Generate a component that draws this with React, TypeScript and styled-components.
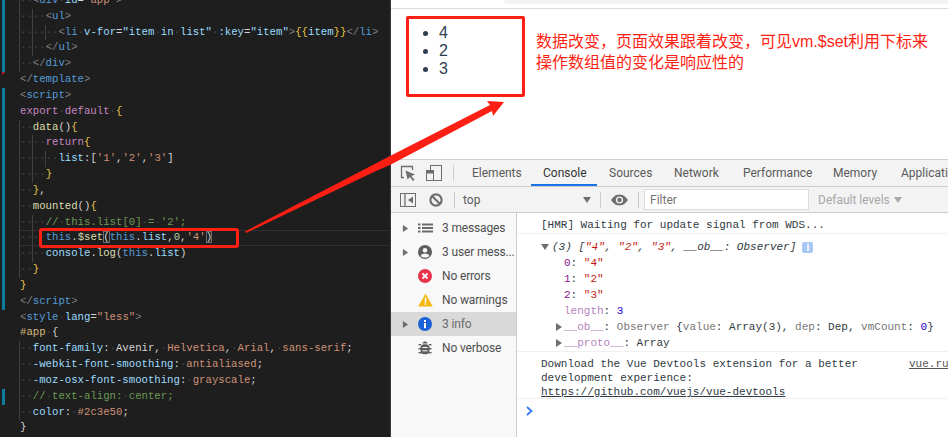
import React from "react"
import styled, { createGlobalStyle } from "styled-components"

const GlobalStyle = createGlobalStyle`
  html, body {
    margin: 0;
    padding: 0;
    background: #fff;
  }
`

const Page = styled.div`
  position: relative;
  display: flex;
  width: 948px;
  height: 437px;
  overflow: hidden;
  font-family: Roboto, "Liberation Sans", sans-serif;
`

/* ---------- editor ---------- */

const Editor = styled.div`
  position: relative;
  flex: 0 0 390px;
  height: 437px;
  overflow: hidden;
  background: #1e1e1e;
  font-family: "Liberation Mono", monospace;
  font-size: 10.67px;
`

const Code = styled.div`
  margin-top: -7px;
`

const GUIDE_X = [19, 32, 45]

const lineBackground = (guides: number[], mod?: "bar" | "del", active?: boolean) => {
  const layers = guides.map(
    (g) => `linear-gradient(#404040, #404040) ${GUIDE_X[g]}px 0 / 1px 100% no-repeat`
  )
  if (mod === "bar") layers.push("linear-gradient(#0c7d9d, #0c7d9d) 2px 0 / 3px 100% no-repeat")
  if (mod === "del") {
    layers.push("linear-gradient(to bottom right, #b3142a 50%, transparent 50%) 2px 0 / 4px 4px no-repeat")
  }
  if (active) {
    layers.push("linear-gradient(#303030, #303030) 20px 0 / 100% 1px no-repeat")
    layers.push("linear-gradient(#303030, #303030) 20px 100% / 100% 1px no-repeat")
  }
  return layers.length ? layers.join(", ") : "none"
}

const Line = styled.div<{ $guides: number[]; $mod?: "bar" | "del"; $active?: boolean }>`
  height: 15.84px;
  line-height: 15.84px;
  padding-left: 20px;
  white-space: pre;
  background: ${(p) => lineBackground(p.$guides, p.$mod, p.$active)};
`

const Token = styled.span<{ $c: string; $match?: boolean }>`
  color: ${(p) => p.$c};
  ${(p) => (p.$match ? "box-shadow: inset 0 0 0 1px #6f6f6f;" : "")}
`

const Dot = styled.span`
  color: #454545;
`

const SetMarker = styled.div`
  position: absolute;
  left: 39px;
  top: 228px;
  width: 200px;
  height: 20px;
  box-sizing: border-box;
  border: 3px solid #fe1f14;
  border-radius: 3px;
`

const c = {
  punct: "#808080",
  tag: "#569cd6",
  attr: "#9cdcfe",
  str: "#ce9178",
  text: "#d4d4d4",
  kw: "#c586c0",
  fn: "#dcdcaa",
  gold: "#e8c547",
  com: "#6a9955",
  num: "#b5cea8",
  sel: "#d7ba7d",
}

type Part = [string, string, boolean?]
type CodeLine = { parts: Part[]; guides?: number[]; mod?: "bar" | "del"; active?: boolean }

const codeLines: CodeLine[] = [
  { mod: "bar", guides: [0], parts: [["  ", c.text], ["<", c.punct], ["div", c.tag], [" id", c.attr], ["=", c.text], ['"app"', c.str], [">", c.punct]] },
  { mod: "bar", guides: [0, 1], parts: [["    ", c.text], ["<", c.punct], ["ul", c.tag], [">", c.punct]] },
  {
    mod: "bar",
    guides: [0, 1, 2],
    parts: [
      ["      ", c.text], ["<", c.punct], ["li", c.tag], [" v-for", c.attr], ["=", c.text], ['"item in list"', c.attr],
      [" :key", c.attr], ["=", c.text], ['"item"', c.attr], [">", c.punct], ["{{", c.gold], ["item", c.attr], ["}}", c.gold], ["</", c.punct], ["li", c.tag], [">", c.punct],
    ],
  },
  { mod: "bar", guides: [0, 1], parts: [["    ", c.text], ["</", c.punct], ["ul", c.tag], [">", c.punct]] },
  { mod: "bar", guides: [0], parts: [["  ", c.text], ["</", c.punct], ["div", c.tag], [">", c.punct]] },
  { mod: "del", parts: [["</", c.punct], ["template", c.tag], [">", c.punct]] },
  { mod: "bar", parts: [["<", c.punct], ["script", c.tag], [">", c.punct]] },
  { mod: "bar", parts: [["export default ", c.kw], ["{", c.gold]] },
  { mod: "bar", guides: [0], parts: [["  ", c.text], ["data", c.fn], ["()", c.text], ["{", c.gold]] },
  { mod: "bar", guides: [0, 1], parts: [["    ", c.text], ["return", c.kw], ["{", c.gold]] },
  { mod: "bar", guides: [0, 1, 2], parts: [["      ", c.text], ["list", c.attr], [":", c.text], ["[", c.text], ["'1'", c.str], [",", c.text], ["'2'", c.str], [",", c.text], ["'3'", c.str], ["]", c.text]] },
  { mod: "bar", guides: [0, 1], parts: [["    ", c.text], ["}", c.gold]] },
  { mod: "bar", guides: [0], parts: [["  ", c.text], ["}", c.gold], [",", c.text]] },
  { mod: "bar", guides: [0], parts: [["  ", c.text], ["mounted", c.fn], ["()", c.text], ["{", c.gold]] },
  { mod: "bar", guides: [0, 1], parts: [["    ", c.text], ["// this.list[0] = '2';", c.com]] },
  {
    mod: "bar",
    guides: [0, 1],
    active: true,
    parts: [
      ["    ", c.text], ["this", c.tag], [".", c.text], ["$set", c.fn], ["(", c.text, true], ["this", c.tag], [".", c.text], ["list", c.attr],
      [",", c.text], ["0", c.num], [",", c.text], ["'4'", c.str], [")", c.text, true],
    ],
  },
  { mod: "bar", guides: [0, 1], parts: [["    ", c.text], ["console", c.attr], [".", c.text], ["log", c.fn], ["(", c.text], ["this", c.tag], [".", c.text], ["list", c.attr], [")", c.text]] },
  { mod: "bar", guides: [0], parts: [["  ", c.text], ["}", c.gold]] },
  { mod: "bar", parts: [["}", c.gold]] },
  { mod: "bar", parts: [["</", c.punct], ["script", c.tag], [">", c.punct]] },
  { parts: [["<", c.punct], ["style", c.tag], [" lang", c.attr], ["=", c.text], ['"less"', c.str], [">", c.punct]] },
  { parts: [["#app", c.sel], [" ", c.text], ["{", c.text]] },
  { guides: [0], parts: [["  ", c.text], ["font-family", c.attr], [": ", c.text], ["Avenir", c.text], [", ", c.text], ["Helvetica", c.str], [", ", c.text], ["Arial", c.str], [", ", c.text], ["sans-serif", c.str], [";", c.text]] },
  { guides: [0], parts: [["  ", c.text], ["-webkit-font-smoothing", c.attr], [": ", c.text], ["antialiased", c.str], [";", c.text]] },
  { guides: [0], parts: [["  ", c.text], ["-moz-osx-font-smoothing", c.attr], [": ", c.text], ["grayscale", c.str], [";", c.text]] },
  { mod: "bar", guides: [0], parts: [["  ", c.text], ["// text-align: center;", c.com]] },
  { guides: [0], parts: [["  ", c.text], ["color", c.attr], [": ", c.text], ["#2c3e50", c.str], [";", c.text]] },
  { parts: [["}", c.text]] },
]

const renderPart = ([text, color, match]: Part, i: number) => (
  <Token key={i} $c={color} $match={match}>
    {text.split(/( )/).map((piece, j) =>
      piece === " " ? <Dot key={j}>·</Dot> : piece
    )}
  </Token>
)

/* ---------- browser ---------- */

const Browser = styled.div`
  flex: 1;
  min-width: 0;
  display: flex;
  flex-direction: column;
  border-left: 1px solid #3a3a3a;
  background: #fff;
`

const Preview = styled.div`
  flex: 0 0 160px;
  box-sizing: border-box;
  display: flex;
  flex-direction: column;
  border-bottom: 1px solid #cfcfcf;
`

const TopStrip = styled.div`
  height: 8px;
  border-bottom: 1px solid #dcdcdc;
  display: flex;
  justify-content: flex-end;
`

const StripFill = styled.div`
  width: 444px;
  height: 4px;
  background: #f1f3f4;
  border-bottom-left-radius: 4px;
`

const PreviewBody = styled.div`
  display: flex;
  align-items: flex-start;
  padding: 7px 0 0 15px;
`

const ResultBox = styled.div`
  flex: none;
  width: 119px;
  height: 81px;
  box-sizing: border-box;
  border: 3px solid #fe1f14;
  border-radius: 2px;
  padding-top: 5px;
`

const ResultList = styled.ul`
  margin: 0;
  padding-left: 30px;
  font-family: "Liberation Sans", Arial, sans-serif;
  font-size: 16px;
  line-height: 18px;
  color: #2c3e50;
`

const Note = styled.div`
  flex: none;
  margin: 15px 0 0 11px;
  width: 400px;
  font-family: "Liberation Sans", "Noto Sans CJK SC", sans-serif;
  font-size: 16px;
  line-height: 21px;
  color: #fe1f14;
`

const DevTools = styled.div`
  flex: 1;
  min-height: 0;
  display: flex;
  flex-direction: column;
`

const Toolbar = styled.div<{ $h: number }>`
  flex: 0 0 ${(p) => p.$h}px;
  box-sizing: border-box;
  display: flex;
  align-items: center;
  padding-left: 9px;
  background: #f3f3f3;
  border-bottom: 1px solid #cccccc;
  white-space: nowrap;
`

const Divider = styled.div<{ $left: number; $right: number }>`
  flex: none;
  width: 1px;
  height: 16px;
  margin: 0 ${(p) => p.$right}px 0 ${(p) => p.$left}px;
  background: #cccccc;
`

const Tab = styled.div<{ $active?: boolean; $w: number }>`
  flex: none;
  box-sizing: border-box;
  width: ${(p) => p.$w}px;
  height: 100%;
  padding: 2px 0 0 12px;
  display: flex;
  align-items: center;
  font-size: 12px;
  color: ${(p) => (p.$active ? "#333" : "#5a5a5a")};
  border-bottom: 2px solid ${(p) => (p.$active ? "#1a73e8" : "transparent")};
`

const ContextLabel = styled.div`
  flex: none;
  width: 120px;
  font-size: 12px;
  color: #5a5a5a;
`

const FilterBox = styled.div`
  flex: none;
  box-sizing: border-box;
  width: 165px;
  height: 21px;
  padding-left: 5px;
  display: flex;
  align-items: center;
  background: #fff;
  border: 1px solid #dcdcdc;
  font-size: 12px;
  color: #757575;
`

const LevelsLabel = styled.div`
  flex: none;
  margin: 0 4px 0 9px;
  font-size: 12px;
  color: #a8a8a8;
`

const ConsoleArea = styled.div`
  flex: 1;
  min-height: 0;
  display: flex;
`

const Sidebar = styled.div`
  flex: 0 0 125px;
  min-width: 0;
  padding-top: 3px;
  background: #f8f8f8;
  border-right: 1px solid #cccccc;
`

const SideRow = styled.div<{ $selected?: boolean }>`
  height: 24px;
  display: flex;
  align-items: center;
  padding-left: 11px;
  font-size: 12px;
  letter-spacing: -0.15px;
  color: ${(p) => (p.$selected ? "#6a6a6a" : "#4f4f4f")};
  background: ${(p) => (p.$selected ? "#d9d9d9" : "transparent")};
  white-space: nowrap;
`

const ArrowSlot = styled.div`
  flex: 0 0 8px;
  display: flex;
`

const IconSlot = styled.div`
  flex: 0 0 16px;
  margin: 0 9px 0 7px;
  display: flex;
  justify-content: center;
`

const Output = styled.div`
  flex: 1;
  min-width: 0;
  font-family: "Liberation Mono", monospace;
  font-size: 11px;
  color: #303942;
`

const PlainMessage = styled.div`
  height: 21px;
  box-sizing: border-box;
  padding: 5px 0 0 24px;
  line-height: 14px;
  border-bottom: 1px solid #f0f0f0;
  white-space: pre;
`

const LinkedMessage = styled.div`
  height: 47px;
  box-sizing: border-box;
  display: flex;
  padding: 5px 0 0 24px;
  border-bottom: 1px solid #f0f0f0;
  white-space: pre;
`

const TreeMessage = styled.div`
  height: 118px;
  box-sizing: border-box;
  padding: 5px 0 0 24px;
  border-bottom: 1px solid #f0f0f0;
  white-space: pre;
`

const TreeRow = styled.div<{ $indent?: number; $italic?: boolean }>`
  height: 16px;
  line-height: 16px;
  display: flex;
  align-items: center;
  padding-left: ${(p) => p.$indent ?? 0}px;
  font-style: ${(p) => (p.$italic ? "italic" : "normal")};
`

const Twist = styled.div<{ $w: number }>`
  flex: 0 0 ${(p) => p.$w}px;
  display: flex;
`

const MessageText = styled.div`
  width: 368px;
  flex: none;
  line-height: 14px;
`

const UrlText = styled.span`
  text-decoration: underline;
`

const SourceLink = styled.span`
  flex: none;
  line-height: 14px;
  color: #545454;
  text-decoration: underline;
`

const Prompt = styled.div`
  padding: 7px 0 0 9px;
  display: flex;
`

const Key = styled.span<{ $dim?: boolean }>`
  color: ${(p) => (p.$dim ? "#b583c0" : "#881391")};
`
const Str = styled.span`
  color: #c41a16;
`
const Num = styled.span`
  color: #1c00cf;
`
const Muted = styled.span`
  color: #777;
`

const InfoBadge = styled.span`
  width: 11px;
  height: 11px;
  margin-left: 6px;
  border-radius: 2px;
  background: #a9c7f5;
  color: #fff;
  font-family: "Liberation Sans", sans-serif;
  font-size: 10px;
  font-style: normal;
  font-weight: bold;
  line-height: 11px;
  text-align: center;
`

const Overlay = styled.svg`
  position: absolute;
  left: 0;
  top: 0;
  pointer-events: none;
`

/* ---------- drawings ---------- */

const GRAY = "#6e6e6e"

const InspectIcon = () => (
  <svg width="16" height="17" viewBox="0 0 16 17" style={{ flex: "none" }}>
    <path d="M4 12.5H1.5V1.5H12.5V5" fill="none" stroke={GRAY} strokeWidth="1.3" />
    <path d="M5.5 5.5L15 9.5L11.5 11L14.5 15L13 16L10 12L7.5 14.5Z" fill={GRAY} />
  </svg>
)

const DeviceIcon = () => (
  <svg width="16" height="16" viewBox="0 0 16 16" style={{ flex: "none", marginLeft: 10 }}>
    <rect x="4.5" y="0.5" width="11" height="15" fill="none" stroke={GRAY} strokeWidth="1" />
    <rect x="0.5" y="5.5" width="7" height="10" fill="#f3f3f3" stroke={GRAY} strokeWidth="1" />
    <rect x="1" y="6" width="6" height="2.5" fill={GRAY} />
  </svg>
)

const PanelIcon = () => (
  <svg width="16" height="14" viewBox="0 0 16 14" style={{ flex: "none" }}>
    <rect x="0.5" y="0.5" width="15" height="13" fill="none" stroke={GRAY} strokeWidth="1" />
    <path d="M5 0.5V13.5" stroke={GRAY} strokeWidth="1.3" />
    <path d="M13 3.5V10.5L8 7Z" fill={GRAY} />
  </svg>
)

const BlockIcon = () => (
  <svg width="14" height="14" viewBox="0 0 14 14" style={{ flex: "none", marginLeft: 13 }}>
    <circle cx="7" cy="7" r="5.6" fill="none" stroke={GRAY} strokeWidth="2.2" />
    <path d="M3 3L11 11" stroke={GRAY} strokeWidth="2.2" />
  </svg>
)

const EyeIcon = () => (
  <svg width="17" height="12" viewBox="0 0 17 12" style={{ flex: "none" }}>
    <path d="M8.5 0.5C12.5 0.5 15.5 3.5 16.8 6C15.5 8.5 12.5 11.5 8.5 11.5C4.5 11.5 1.5 8.5 0.2 6C1.5 3.5 4.5 0.5 8.5 0.5Z" fill={GRAY} />
    <circle cx="8.5" cy="6" r="3.6" fill="#f3f3f3" />
    <circle cx="8.5" cy="6" r="2.2" fill={GRAY} />
  </svg>
)

const Triangle = ({ dir, color = "#6e6e6e", size = 8 }: { dir: "right" | "down"; color?: string; size?: number }) => (
  <svg width={size} height={size} viewBox="0 0 8 8" style={{ flex: "none" }}>
    <path d={dir === "right" ? "M1 0L7 4L1 8Z" : "M0 1H8L4 7Z"} fill={color} />
  </svg>
)

const ListIcon = () => (
  <svg width="15" height="10" viewBox="0 0 15 10">
    <g fill="#6a6a6a">
      <rect x="0" y="0.5" width="2.5" height="2" />
      <rect x="4" y="0.5" width="11" height="2" />
      <rect x="0" y="4" width="2.5" height="2" />
      <rect x="4" y="4" width="11" height="2" />
      <rect x="0" y="7.5" width="2.5" height="2" />
      <rect x="4" y="7.5" width="11" height="2" />
    </g>
  </svg>
)

const UserIcon = () => (
  <svg width="14" height="14" viewBox="0 0 14 14">
    <circle cx="7" cy="7" r="7" fill="#5f5f5f" />
    <circle cx="7" cy="5.2" r="2.3" fill="#f8f8f8" />
    <path d="M2.6 11C3.4 9 5 8.4 7 8.4S10.6 9 11.4 11C10.2 12.1 8.7 12.6 7 12.6S3.8 12.1 2.6 11Z" fill="#f8f8f8" />
  </svg>
)

const ErrorIcon = () => (
  <svg width="14" height="14" viewBox="0 0 14 14">
    <circle cx="7" cy="7" r="7" fill="#e8344a" />
    <path d="M4.5 4.5L9.5 9.5M9.5 4.5L4.5 9.5" stroke="#fff" strokeWidth="1.8" />
  </svg>
)

const WarnIcon = () => (
  <svg width="15" height="14" viewBox="0 0 15 14">
    <path d="M7.5 0.5L14.8 13.5H0.2Z" fill="#f4b70e" />
    <rect x="6.7" y="4.5" width="1.6" height="5" fill="#fff" />
    <rect x="6.7" y="10.3" width="1.6" height="1.6" fill="#fff" />
  </svg>
)

const InfoIcon = () => (
  <svg width="14" height="14" viewBox="0 0 14 14">
    <circle cx="7" cy="7" r="7" fill="#1a62d6" />
    <rect x="6" y="6" width="2" height="5.2" fill="#fff" />
    <rect x="6" y="3" width="2" height="2" fill="#fff" />
  </svg>
)

const BugIcon = () => (
  <svg width="14" height="14" viewBox="0 0 14 14">
    <g fill="#5f5f5f">
      <path d="M4.5 2.5C4.8 1.2 5.8 0.6 7 0.6S9.2 1.2 9.5 2.5Z" />
      <rect x="2.5" y="3.2" width="9" height="10" rx="3.5" />
      <rect x="0.5" y="3" width="2.5" height="1.4" />
      <rect x="0.5" y="7" width="2.5" height="1.4" />
      <rect x="0.5" y="11" width="2.5" height="1.4" />
      <rect x="11" y="3" width="2.5" height="1.4" />
      <rect x="11" y="7" width="2.5" height="1.4" />
      <rect x="11" y="11" width="2.5" height="1.4" />
    </g>
    <path d="M4.5 6.5H9.5M4.5 9.8H9.5" stroke="#f8f8f8" strokeWidth="1" />
  </svg>
)

const sideRows = [
  { label: "3 messages", icon: <ListIcon />, arrow: true },
  { label: "3 user mess...", icon: <UserIcon />, arrow: true },
  { label: "No errors", icon: <ErrorIcon /> },
  { label: "No warnings", icon: <WarnIcon /> },
  { label: "3 info", icon: <InfoIcon />, arrow: true, selected: true },
  { label: "No verbose", icon: <BugIcon /> },
]

const tabs = [
  { label: "Elements", w: 71 },
  { label: "Console", w: 66, active: true },
  { label: "Sources", w: 65 },
  { label: "Network", w: 69 },
  { label: "Performance", w: 90 },
  { label: "Memory", w: 68 },
  { label: "Application", w: 90 },
]

export default function App() {
  return (
    <>
      <GlobalStyle />
      <Page>
        <Editor>
          <Code>
            {codeLines.map((line, i) => (
              <Line key={i} $guides={line.guides ?? []} $mod={line.mod} $active={line.active}>
                {line.parts.map(renderPart)}
              </Line>
            ))}
          </Code>
          <SetMarker />
        </Editor>
        <Browser>
          <Preview>
            <TopStrip>
              <StripFill />
            </TopStrip>
            <PreviewBody>
              <ResultBox>
                <ResultList>
                  <li>4</li>
                  <li>2</li>
                  <li>3</li>
                </ResultList>
              </ResultBox>
              <Note>数据改变，页面效果跟着改变，可见vm.$set利用下标来操作数组值的变化是响应性的</Note>
            </PreviewBody>
          </Preview>
          <DevTools>
            <Toolbar $h={27}>
              <InspectIcon />
              <DeviceIcon />
              <Divider $left={11} $right={6} />
              {tabs.map((tab) => (
                <Tab key={tab.label} $w={tab.w} $active={tab.active}>
                  {tab.label}
                </Tab>
              ))}
            </Toolbar>
            <Toolbar $h={26}>
              <PanelIcon />
              <BlockIcon />
              <Divider $left={11} $right={8} />
              <ContextLabel>top</ContextLabel>
              <Triangle dir="down" color="#6e6e6e" />
              <Divider $left={9} $right={10} />
              <EyeIcon />
              <Divider $left={10} $right={5} />
              <FilterBox>Filter</FilterBox>
              <LevelsLabel>Default levels</LevelsLabel>
              <Triangle dir="down" color="#a8a8a8" />
            </Toolbar>
            <ConsoleArea>
              <Sidebar>
                {sideRows.map((row) => (
                  <SideRow key={row.label} $selected={row.selected}>
                    <ArrowSlot>{row.arrow && <Triangle dir="right" size={7} />}</ArrowSlot>
                    <IconSlot>{row.icon}</IconSlot>
                    {row.label}
                  </SideRow>
                ))}
              </Sidebar>
              <Output>
                <PlainMessage>[HMR] Waiting for update signal from WDS...</PlainMessage>
                <TreeMessage>
                  <TreeRow $italic>
                    <Twist $w={11}>
                      <Triangle dir="down" />
                    </Twist>
                    <span>
                      (3) [<Str>"4"</Str>, <Str>"2"</Str>, <Str>"3"</Str>, __ob__: Observer]
                    </span>
                    <InfoBadge>i</InfoBadge>
                  </TreeRow>
                  <TreeRow $indent={23}>
                    <span>
                      <Key>0</Key>: <Str>"4"</Str>
                    </span>
                  </TreeRow>
                  <TreeRow $indent={23}>
                    <span>
                      <Key>1</Key>: <Str>"2"</Str>
                    </span>
                  </TreeRow>
                  <TreeRow $indent={23}>
                    <span>
                      <Key>2</Key>: <Str>"3"</Str>
                    </span>
                  </TreeRow>
                  <TreeRow $indent={23}>
                    <span>
                      <Key $dim>length</Key>: <Num>3</Num>
                    </span>
                  </TreeRow>
                  <TreeRow $indent={14}>
                    <Twist $w={9}>
                      <Triangle dir="right" />
                    </Twist>
                    <span>
                      <Key $dim>__ob__</Key>: <Muted>Observer</Muted> {"{"}
                      <Muted>value</Muted>: Array(3), <Muted>dep</Muted>: Dep, <Muted>vmCount</Muted>: <Num>0</Num>
                      {"}"}
                    </span>
                  </TreeRow>
                  <TreeRow $indent={14}>
                    <Twist $w={9}>
                      <Triangle dir="right" />
                    </Twist>
                    <span>
                      <Key $dim>__proto__</Key>: Array
                    </span>
                  </TreeRow>
                </TreeMessage>
                <LinkedMessage>
                  <MessageText>
                    Download the Vue Devtools extension for a better
                    {"\n"}development experience:
                    {"\n"}
                    <UrlText>https://github.com/vuejs/vue-devtools</UrlText>
                  </MessageText>
                  <SourceLink>vue.runtime.esm.js:8</SourceLink>
                </LinkedMessage>
                <Prompt>
                  <svg width="7" height="10" viewBox="0 0 7 10">
                    <path d="M1 1L5.5 5L1 9" fill="none" stroke="#367cf1" strokeWidth="1.8" />
                  </svg>
                </Prompt>
              </Output>
            </ConsoleArea>
          </DevTools>
        </Browser>
        <Overlay width="948" height="437" viewBox="0 0 948 437">
          <path d="M245 231.5L390 156L490 105L487 101L504 102L493 116L492 111L390 165L376 171L246 233Z" fill="#fe1f14" />
        </Overlay>
      </Page>
    </>
  )
}
